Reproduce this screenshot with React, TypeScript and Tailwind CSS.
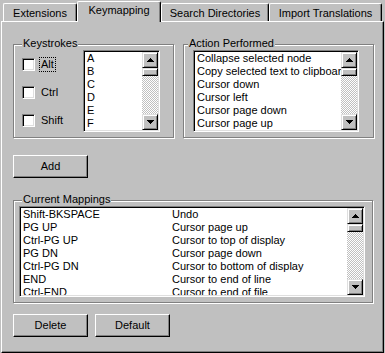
import React from "react";

const raised =
  "border border-t-white border-l-white border-r-black border-b-black shadow-[inset_-1px_-1px_0_#808080] bg-[#c0c0c0]";
const scrollBtn =
  "border border-t-[#dfdfdf] border-l-[#dfdfdf] border-r-black border-b-black shadow-[inset_1px_1px_0_#fff,inset_-1px_-1px_0_#808080] bg-[#c0c0c0]";
const sunken =
  "border border-t-[#808080] border-l-[#808080] border-r-white border-b-white shadow-[inset_1px_1px_0_#000,inset_-1px_-1px_0_#dfdfdf] p-px bg-white";

const Arrow = ({ up }: { up?: boolean }) => (
  <svg width="7" height="4" viewBox="0 0 7 4" shapeRendering="crispEdges">
    <path
      d={up ? "M3 0h1v1h1v1h1v1h1v1H0V3h1V2h1V1h1z" : "M0 0h7v1H6v1H5v1H4v1H3V3H2V2H1V1H0z"}
      fill="#000"
    />
  </svg>
);

const ScrollBar = () => (
  <div className="flex w-4 shrink-0 flex-col">
    <div className={`${scrollBtn} flex h-4 shrink-0 items-center justify-center`}>
      <Arrow up />
    </div>
    <div className={`${scrollBtn} h-2 shrink-0`} />
    <div className="flex-1 bg-[image:repeating-conic-gradient(#fff_0_25%,#c0c0c0_0_50%)] bg-size-[2px_2px]" />
    <div className={`${scrollBtn} flex h-4 shrink-0 items-center justify-center`}>
      <Arrow />
    </div>
  </div>
);

const ListBox = ({ className, children }: { className: string; children: React.ReactNode }) => (
  <div className={`${sunken} flex ${className}`}>
    <div className="min-w-0 flex-1 overflow-hidden">{children}</div>
    <ScrollBar />
  </div>
);

const Row = ({ children }: { children: React.ReactNode }) => (
  <div className="flex h-[13px] whitespace-nowrap pl-[2px] leading-[13px]">{children}</div>
);

const Group = ({
  label,
  className,
  labelClass,
  children,
}: {
  label: string;
  className: string;
  labelClass: string;
  children: React.ReactNode;
}) => (
  <div
    className={`relative border border-[#808080] shadow-[1px_1px_0_#fff,inset_1px_1px_0_#fff] ${className}`}
  >
    <span className={`absolute top-[-8px] bg-[#c0c0c0] px-px leading-[13px] ${labelClass}`}>
      {label}
    </span>
    {children}
  </div>
);

const Check = ({ label, focus }: { label: string; focus?: boolean }) => (
  <div className="flex h-[13px] items-center">
    <div className="h-[13px] w-[13px] shrink-0 border border-t-[#808080] border-l-[#808080] border-r-white border-b-white bg-white shadow-[inset_1px_1px_0_#000,inset_-1px_-1px_0_#dfdfdf]" />
    <span
      className={`ml-[4px] border border-dotted px-px leading-[13px] ${
        focus ? "border-black" : "border-transparent"
      }`}
    >
      {label}
    </span>
  </div>
);

const Button = ({ label }: { label: string }) => (
  <div className={`${raised} flex h-[23px] w-[75px] items-center justify-center`}>{label}</div>
);

const tabs = [
  { label: "Extensions", w: "w-[74px]", active: false },
  { label: "Keymapping", w: "w-[84px]", active: true },
  { label: "Search Directories", w: "w-[108px]", active: false },
  { label: "Import Translations", w: "w-[113px]", active: false },
];

const actions = [
  "Collapse selected node",
  "Copy selected text to clipboard",
  "Cursor down",
  "Cursor left",
  "Cursor page down",
  "Cursor page up",
];

const mappings = [
  ["Shift-BKSPACE", "Undo"],
  ["PG UP", "Cursor page up"],
  ["Ctrl-PG UP", "Cursor to top of display"],
  ["PG DN", "Cursor page down"],
  ["Ctrl-PG DN", "Cursor to bottom of display"],
  ["END", "Cursor to end of line"],
  ["Ctrl-END", "Cursor to end of file"],
];

export default function App() {
  return (
    <div className="h-[353px] w-[385px] overflow-hidden bg-[#c0c0c0] font-['Liberation_Sans',Arial,sans-serif] text-[11px] leading-[13px] text-black">
      <div className="flex h-[21px] items-end pl-[3px]">
        {tabs.map((t) =>
          t.active ? (
            <div
              key={t.label}
              className={`relative z-10 -mb-px h-[21px] ${t.w} rounded-t-[2px] border border-b-0 border-t-white border-l-white border-r-black bg-[#c0c0c0] pt-[2px] text-center shadow-[inset_-1px_0_0_#808080]`}
            >
              {t.label}
            </div>
          ) : (
            <div
              key={t.label}
              className={`h-[18px] ${t.w} rounded-t-[2px] border border-b-0 border-t-white border-l-white border-r-black pt-[3px] text-center shadow-[inset_-1px_0_0_#808080]`}
            >
              {t.label}
            </div>
          )
        )}
      </div>

      <div className="ml-px flex h-[332px] w-[383px] flex-col border border-t-white border-l-white border-r-black border-b-black pl-[11px] pt-[22px] shadow-[inset_-1px_-1px_0_#808080]">
        <div className="flex gap-[9px]">
          <Group label="Keystrokes" labelClass="left-[8px]" className="flex h-[94px] w-[161px] pl-[8px] pt-[5px]">
            <div className="flex w-[61px] flex-col gap-[15px] pt-[8px]">
              <Check label="Alt" focus />
              <Check label="Ctrl" />
              <Check label="Shift" />
            </div>
            <ListBox className="h-[82px] w-[77px]">
              {["A", "B", "C", "D", "E", "F"].map((k) => (
                <Row key={k}>{k}</Row>
              ))}
            </ListBox>
          </Group>
          <Group label="Action Performed" labelClass="left-[4px]" className="flex h-[94px] w-[191px] pl-[9px] pt-[5px]">
            <ListBox className="h-[82px] w-[166px]">
              {actions.map((a) => (
                <Row key={a}>{a}</Row>
              ))}
            </ListBox>
          </Group>
        </div>

        <div className="mt-[17px]">
          <Button label="Add" />
        </div>

        <Group label="Current Mappings" labelClass="left-[8px]" className="mt-[22px] h-[103px] w-[360px] pl-[5px] pt-[5px]">
          <ListBox className="h-[91px] w-[346px]">
            {mappings.map(([k, a]) => (
              <Row key={k}>
                <span className="w-[149px] shrink-0">{k}</span>
                <span>{a}</span>
              </Row>
            ))}
          </ListBox>
        </Group>

        <div className="mt-[11px] flex gap-[7px]">
          <Button label="Delete" />
          <Button label="Default" />
        </div>
      </div>
    </div>
  );
}
